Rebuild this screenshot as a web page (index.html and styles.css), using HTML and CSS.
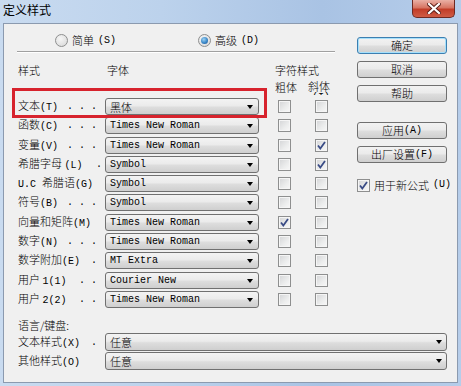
FILE: index.html
```html
<!DOCTYPE html>
<html lang="zh">
<head>
<meta charset="utf-8">
<title>定义样式</title>
<link rel="stylesheet" href="styles.css">
</head>
<body>
<div class="window">
  <div class="titlebar">
    <span class="title">定义样式</span>
    <div class="close">
      <svg width="14" height="11" viewBox="0 0 14 11"><path d="M2 1 L12 10 M12 1 L2 10" stroke="#5a1d16" stroke-width="4" stroke-linecap="square"/><path d="M2 1 L12 10 M12 1 L2 10" stroke="#fff" stroke-width="2.2" stroke-linecap="square"/></svg>
    </div>
  </div>
  <div class="panel">
    <div class="top">
      <div class="main">
        <div class="radios">
          <div class="radio r1"><span class="rdot"></span>简单<span class="m">(S)</span></div>
          <div class="radio r2 on"><span class="rdot"></span>高级<span class="m">(D)</span></div>
        </div>
        <div class="sep"></div>
        <div class="head">
          <span class="h-style">样式</span>
          <span class="h-font">字体</span>
          <span class="h-char">字符样式</span>
          <span class="h-bold">粗体</span>
          <span class="h-ital">斜体<span class="m sub">(I)</span></span>
        </div>
        <div class="rows">
          <div class="lbl"><span>文本<span class="m">(T)</span></span><span class="m dots">. . .</span></div>
          <div class="combo"><span class="val cjk">黑体</span><i class="arrow"></i></div>
          <span class="cb"></span><span class="cb"></span>

          <div class="lbl"><span>函数<span class="m">(C)</span></span><span class="m dots">. . .</span></div>
          <div class="combo"><span class="val">Times New Roman</span><i class="arrow"></i></div>
          <span class="cb"></span><span class="cb"></span>

          <div class="lbl"><span>变量<span class="m">(V)</span></span><span class="m dots">. . .</span></div>
          <div class="combo"><span class="val">Times New Roman</span><i class="arrow"></i></div>
          <span class="cb"></span><span class="cb on"><svg width="11" height="11" viewBox="0 0 11 11"><path d="M2 5.5 L4.3 8.5 L9 2" fill="none" stroke="#3a4c86" stroke-width="1.8"/></svg></span>

          <div class="lbl"><span>希腊字母 <span class="m">(L)</span></span><span class="m dots d1">.</span></div>
          <div class="combo"><span class="val">Symbol</span><i class="arrow"></i></div>
          <span class="cb"></span><span class="cb on"><svg width="11" height="11" viewBox="0 0 11 11"><path d="M2 5.5 L4.3 8.5 L9 2" fill="none" stroke="#3a4c86" stroke-width="1.8"/></svg></span>

          <div class="lbl"><span><span class="m">U.C </span>希腊语<span class="m">(G)</span></span></div>
          <div class="combo"><span class="val">Symbol</span><i class="arrow"></i></div>
          <span class="cb"></span><span class="cb"></span>

          <div class="lbl"><span>符号<span class="m">(B)</span></span><span class="m dots">. . .</span></div>
          <div class="combo"><span class="val">Symbol</span><i class="arrow"></i></div>
          <span class="cb"></span><span class="cb"></span>

          <div class="lbl"><span>向量和矩阵<span class="m">(M)</span></span></div>
          <div class="combo"><span class="val">Times New Roman</span><i class="arrow"></i></div>
          <span class="cb on"><svg width="11" height="11" viewBox="0 0 11 11"><path d="M2 5.5 L4.3 8.5 L9 2" fill="none" stroke="#3a4c86" stroke-width="1.8"/></svg></span><span class="cb"></span>

          <div class="lbl"><span>数字<span class="m">(N)</span></span><span class="m dots">. . .</span></div>
          <div class="combo"><span class="val">Times New Roman</span><i class="arrow"></i></div>
          <span class="cb"></span><span class="cb"></span>

          <div class="lbl"><span>数学附加<span class="m">(E)</span></span><span class="m dots">.</span></div>
          <div class="combo"><span class="val">MT Extra</span><i class="arrow"></i></div>
          <span class="cb"></span><span class="cb"></span>

          <div class="lbl"><span>用户 <span class="m">1(1)</span></span><span class="m dots">. .</span></div>
          <div class="combo"><span class="val">Courier New</span><i class="arrow"></i></div>
          <span class="cb"></span><span class="cb"></span>

          <div class="lbl"><span>用户 <span class="m">2(2)</span></span><span class="m dots">. .</span></div>
          <div class="combo"><span class="val">Times New Roman</span><i class="arrow"></i></div>
          <span class="cb"></span><span class="cb"></span>
        </div>
        <div class="hilite"></div>
      </div>
      <div class="side">
        <div class="btn default">确定</div>
        <div class="btn">取消</div>
        <div class="btn">帮助</div>
        <div class="btn gap">应用<span class="m">(A)</span></div>
        <div class="btn">出厂设置<span class="m">(F)</span></div>
        <div class="chk"><span class="cb on"><svg width="11" height="11" viewBox="0 0 11 11"><path d="M2 5.5 L4.3 8.5 L9 2" fill="none" stroke="#3a4c86" stroke-width="1.8"/></svg></span>用于新公式<span class="m">(U)</span></div>
      </div>
    </div>
    <div class="bottom">
      <div class="lang">语言/键盘:</div>
      <div class="brow">
        <div class="lbl"><span>文本样式<span class="m">(X)</span></span><span class="m dots">.</span></div>
        <div class="combo wide"><span class="val cjk">任意</span><i class="arrow"></i></div>
      </div>
      <div class="brow">
        <div class="lbl"><span>其他样式<span class="m">(O)</span></span></div>
        <div class="combo wide"><span class="val cjk">任意</span><i class="arrow"></i></div>
      </div>
    </div>
  </div>
</div>
</body>
</html>
```

FILE: styles.css
```css
html, body {
  margin: 0;
  padding: 0;
}
body {
  width: 461px;
  height: 386px;
  overflow: hidden;
  font-family: "Noto Sans CJK SC", "Noto Sans", sans-serif;
  font-size: 11px;
  font-weight: 300;
  color: #000;
}
.window {
  height: 386px;
  background: linear-gradient(90deg, #c9dbf0 0%, #bcd2ec 35%, #a9c3e4 70%, #b6cdea 100%);
  display: flex;
  flex-direction: column;
}
.titlebar {
  height: 23px;
  flex: 0 0 23px;
  display: flex;
  align-items: flex-start;
  padding: 0 6px 0 3px;
  box-sizing: border-box;
}
.title {
  line-height: 20px;
  font-size: 12px;
  font-weight: 400;
}
.close {
  margin-left: auto;
  width: 43px;
  height: 18px;
  box-sizing: border-box;
  border: 1px solid #6e2a22;
  border-top: none;
  border-radius: 0 0 5px 5px;
  background: linear-gradient(#eab0a5 0%, #d77563 45%, #c23d28 55%, #cf5c45 100%);
  display: flex;
  align-items: center;
  justify-content: center;
}
.panel {
  margin: 0 3px;
  height: 360px;
  box-sizing: border-box;
  background: #f0f0f0;
  border: 1px solid #8b9aaf;
}
.m {
  font-family: "Liberation Mono", monospace;
  font-size: 10px;
  font-weight: 400;
}
.top {
  display: flex;
}
.main {
  position: relative;
  width: 353px;
  box-sizing: border-box;
  padding-left: 14px;
}
.radios {
  display: flex;
  padding-top: 10px;
  height: 13px;
}
.radio {
  display: flex;
  align-items: center;
  gap: 4px;
  line-height: 13px;
}
.r1 { margin-left: 37px; }
.r2 { margin-left: 82px; }
.rdot {
  width: 13px;
  height: 13px;
  box-sizing: border-box;
  border-radius: 50%;
  border: 1px solid #8e8f8f;
  background: radial-gradient(circle at 40% 35%, #f6f6f6, #d6d6d6);
  display: flex;
  align-items: center;
  justify-content: center;
}
.radio.on .rdot::after {
  content: "";
  width: 7px;
  height: 7px;
  border-radius: 50%;
  background: radial-gradient(circle at 40% 35%, #9dd3f4 0%, #3a87c8 55%, #1b4f8c 100%);
}
.sep {
  margin: 4px 0 0 -1px;
  width: 318px;
  height: 1px;
  background: #a0a0a0;
  border-bottom: 1px solid #fff;
}
.head {
  margin-top: 9px;
  display: grid;
  grid-template-columns: 87px 154px 45px 45px;
  grid-template-rows: 16px 17px;
  line-height: 16px;
}
.h-style { grid-row: 1; grid-column: 1; }
.h-font { grid-row: 1; grid-column: 2; padding-left: 2px; }
.h-char { grid-row: 1; grid-column: 3 / 5; padding-left: 16px; }
.h-bold { grid-row: 2; grid-column: 3; padding: 3px 0 0 16px; line-height: 12px; }
.h-ital {
  grid-row: 2;
  grid-column: 4;
  padding: 3px 0 0 4px;
  line-height: 11px;
  overflow: hidden;
}
.h-ital .sub {
  display: block;
  padding-left: 4px;
}
.rows {
  margin-top: 3px;
  display: grid;
  grid-template-columns: 87px 154px 32px 37px;
  grid-auto-rows: 17px;
  row-gap: 2.3px;
  align-items: center;
}
.lbl {
  display: flex;
  justify-content: space-between;
  align-items: center;
  padding-right: 8px;
  line-height: 17px;
  white-space: pre;
}
.dots.d1 { margin-right: -5px; }
.combo {
  height: 17px;
  box-sizing: border-box;
  border: 1px solid #707070;
  border-radius: 3px;
  background: linear-gradient(#f3f3f3 0%, #ebebeb 45%, #dddddd 55%, #cfcfcf 100%);
  display: flex;
  align-items: center;
  padding: 0 5px 0 4px;
}
.val {
  font-family: "Liberation Mono", monospace;
  font-size: 10px;
  font-weight: 400;
  flex: 1;
  white-space: pre;
}
.val.cjk {
  font-family: "Noto Sans CJK SC", sans-serif;
  font-size: 11px;
  font-weight: 300;
}
.arrow {
  width: 0;
  height: 0;
  border-left: 3.5px solid transparent;
  border-right: 3.5px solid transparent;
  border-top: 4px solid #000;
  margin-top: 1px;
}
.cb {
  width: 13px;
  height: 13px;
  flex: 0 0 13px;
  box-sizing: border-box;
  border: 1px solid #8e8f8f;
  background: linear-gradient(135deg, #d3d4d6 0%, #eceded 60%, #f8f8f8 100%);
  box-shadow: inset 0 0 0 1px #f5f5f5;
  justify-self: end;
  display: flex;
  align-items: center;
  justify-content: center;
}
.hilite {
  position: absolute;
  left: 8px;
  top: 64px;
  width: 255px;
  height: 30px;
  box-sizing: border-box;
  border: 3px solid #d7232d;
}
.side {
  width: 90px;
  padding-top: 13px;
  display: flex;
  flex-direction: column;
}
.btn {
  height: 17px;
  box-sizing: border-box;
  border: 1px solid #707070;
  border-radius: 3px;
  background: linear-gradient(#f2f2f2 0%, #ebebeb 45%, #dddddd 55%, #cfcfcf 100%);
  display: flex;
  align-items: center;
  justify-content: center;
  line-height: 15px;
  margin-bottom: 7px;
}
.btn.default {
  border-color: #3c7fb1;
  box-shadow: inset 0 0 0 1px #a6e0fb;
}
.btn.gap { margin-top: 13px; }
.chk {
  margin-top: 8px;
  display: flex;
  align-items: center;
  gap: 4px;
  line-height: 14px;
  white-space: nowrap;
}
.bottom {
  padding-left: 14px;
}
.lang {
  margin-top: 10px;
  line-height: 14px;
}
.brow {
  display: grid;
  grid-template-columns: 87px 342px;
  height: 18px;
  margin-top: 1px;
}
.brow .combo {
  height: 18px;
  padding-right: 4px;
}
```
